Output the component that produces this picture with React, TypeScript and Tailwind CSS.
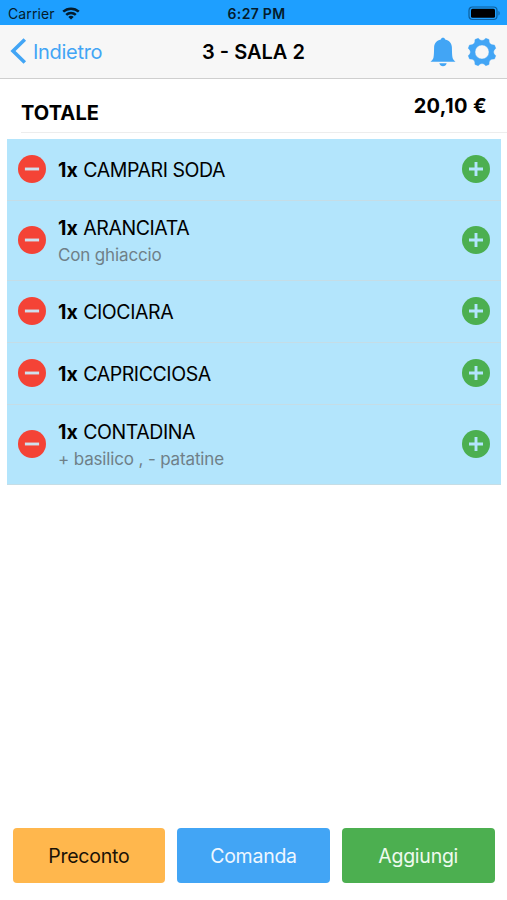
const items = [
  { qty: 1, name: 'CAMPARI SODA', row: 'h-[62px]' },
  { qty: 1, name: 'ARANCIATA', note: 'Con ghiaccio', row: 'h-[80px]' },
  { qty: 1, name: 'CIOCIARA', row: 'h-[62px]' },
  { qty: 1, name: 'CAPRICCIOSA', row: 'h-[62px]' },
  { qty: 1, name: 'CONTADINA', note: '+ basilico , - patatine', row: 'h-[80px]' },
]

const actions = [
  { label: 'Preconto', style: 'bg-[#ffb74d] text-[#1a1206]' },
  { label: 'Comanda', style: 'bg-[#42a5f5] text-[#eef7ff]' },
  { label: 'Aggiungi', style: 'bg-[#4caf50] text-[#eefaee]' },
]

// eight flared teeth around a ring
function gearPath() {
  const pt = (r: number, deg: number) => {
    const a = (deg * Math.PI) / 180
    return `${(15 + r * Math.cos(a)).toFixed(2)} ${(15 + r * Math.sin(a)).toFixed(2)}`
  }
  let d = `M${pt(14.3, 15.5)}`
  for (let i = 0; i < 8; i++) {
    const a = 22.5 + i * 45
    d += `L${pt(14.3, a + 7)}Q${pt(9.3, a + 22.5)} ${pt(14.3, a + 38)}`
  }
  return d + 'ZM22 15a7 7 0 1 0-14 0a7 7 0 1 0 14 0Z'
}

function Gear() {
  return (
    <svg width="30" height="30" viewBox="0 0 30 30" fill="#42a5f5" fillRule="evenodd">
      <path d={gearPath()} stroke="#42a5f5" strokeWidth="0.4" strokeLinejoin="round" />
    </svg>
  )
}

function Bell() {
  return (
    <svg width="26" height="30" viewBox="0 0 26 30" fill="#42a5f5">
      <path d="M13 .8c1.100 0 1.900.6 2.200 1.600 4.100.9 6.500 3.800 6.700 7.800.1 4.500.1 8 .6 10.200.4 1.600 1.400 2.800 3 4.400H.5c1.600-1.600 2.600-2.800 3-4.400.5-2.200.5-5.700.6-10.200.2-4 2.600-6.900 6.700-7.800C11.100 1.400 11.900.8 13 .8Z" />
      <path d="M9.300 26.200h7.400c-.5 1.900-1.900 3-3.700 3s-3.200-1.100-3.700-3Z" />
    </svg>
  )
}

function Wifi() {
  return (
    <svg width="18" height="13" viewBox="0 0 18 13" fill="none" stroke="#041c2c" strokeWidth="2.500">
      <path d="M1.200 4.700C5.600.6 12.400.6 16.800 4.700" />
      <path d="M4.200 7.900c2.700-2.600 6.900-2.600 9.600 0" />
      <path d="M9 12.600 6.300 9.900c1.500-1.400 3.900-1.400 5.400 0Z" fill="#041c2c" stroke="none" />
    </svg>
  )
}

function Battery() {
  return (
    <svg width="33" height="15" viewBox="0 0 33 15">
      <rect x="1" y="1" width="28" height="12.500" rx="3.500" fill="none" stroke="#0d5f9c" strokeWidth="1.200" />
      <rect x="3" y="2.800" width="24" height="9" rx="1.500" fill="#000" />
      <path d="M30.500 5v4.600c1.500-.5 1.500-4.100 0-4.600Z" fill="#0d5f9c" />
    </svg>
  )
}

function RoundIcon({ plus = false }: { plus?: boolean }) {
  return (
    <svg width="28" height="28" viewBox="0 0 28 28" className="shrink-0">
      <circle cx="14" cy="14" r="14" fill={plus ? '#4caf50' : '#f44336'} />
      <path d={plus ? 'M7 14h14M14 7v14' : 'M6.900 14h14.200'} stroke={plus ? '#b3e5fc' : '#cfe0ee'} strokeWidth="2.900" />
    </svg>
  )
}

export default function App() {
  return (
    <div className="flex h-[900px] w-[507px] flex-col overflow-hidden bg-white font-['Inter',sans-serif] text-black">
      <div className="grid h-[25px] shrink-0 grid-cols-3 items-center bg-[#1e9fff] text-[14px] leading-none text-[#041c2c]">
        <div className="flex items-center gap-[7px] pt-[2px] pl-[8px]">
          <span className="tracking-[0.1px]">Carrier</span>
          <Wifi />
        </div>
        <span className="pt-[2px] pl-[6px] text-center font-semibold tracking-[0.300px]">6:27 PM</span>
        <div className="flex justify-end pt-px pr-[6px]">
          <Battery />
        </div>
      </div>

      <header className="grid h-[54px] shrink-0 grid-cols-3 items-center border-b border-[#cfcfcf] bg-[#f7f7f7]">
        <div className="flex items-center gap-[6px] pl-[10px] text-[#42a5f5]">
          <svg width="17" height="26" viewBox="0 0 17 26" fill="none" stroke="currentColor" strokeWidth="3.600" className="-mt-[2px]">
            <path d="M14.800 1.500 3 13l11.800 11.500" />
          </svg>
          <span className="text-[20px] tracking-[-0.3px]">Indietro</span>
        </div>
        <h1 className="text-center text-[20px] font-semibold">3 - SALA 2</h1>
        <div className="flex items-center justify-end gap-[11px] pt-px pr-[10.500px]">
          <Bell />
          <Gear />
        </div>
      </header>

      <div className="ml-[21px] flex h-[54px] shrink-0 justify-between border-b border-[#ededed] pr-[20px] text-[20px] leading-[24px] font-bold">
        <span className="pt-[22px] tracking-[0.1px]">TOTALE</span>
        <span className="pt-[15px] tracking-[0.35px]">20,10 €</span>
      </div>

      <ul className="mt-[6px] mr-[6px] ml-[7px] flex flex-col bg-[#b3e5fc]">
        {items.map((item) => (
          <li key={item.name} className={`flex items-center border-b border-[#c5dde6] pr-[11px] pb-px pl-[11px] ${item.row}`}>
            <RoundIcon />
            <div className="ml-[12px] flex-1 pt-[2px]">
              <p className="text-[19.500px] leading-[28px] whitespace-nowrap">
                <b>{item.qty}x</b> <span className="tracking-[-0.42px]">{item.name}</span>
              </p>
              {item.note && <p className="text-[17px] leading-[27px] tracking-[-0.15px] text-[#6f8088]">{item.note}</p>}
            </div>
            <RoundIcon plus />
          </li>
        ))}
      </ul>

      <footer className="mt-auto mb-[17px] grid grid-cols-3 gap-[12px] px-[12.500px]">
        {actions.map((a) => (
          <button key={a.label} className={`h-[55px] rounded-[4px] pt-[2px] text-[19.500px] tracking-[-0.250px] ${a.style}`}>
            {a.label}
          </button>
        ))}
      </footer>
    </div>
  )
}
